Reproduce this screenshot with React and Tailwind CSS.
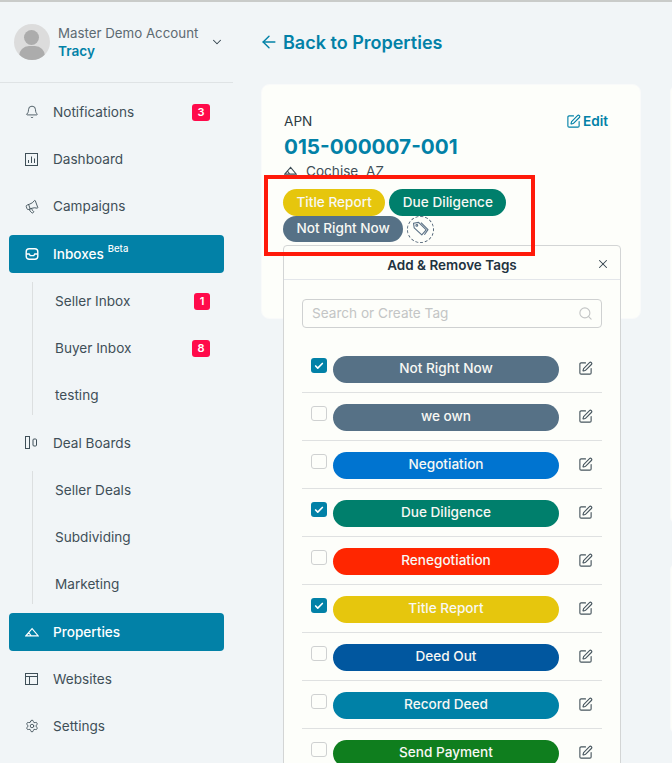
import { ArrowLeft, Bell, Check, ChevronDown, Megaphone, Search, Settings, SquarePen, X } from "lucide-react";

const BoxChart = () => (
  <svg width="13" height="13" viewBox="0 0 13 13" fill="none" stroke="currentColor" strokeWidth="1">
    <rect x="0.5" y="0.5" width="12" height="12" />
    <path d="M3.5 10V7M6.5 10V3.5M9.5 10V5.5" />
  </svg>
);

const InboxIcon = () => (
  <svg width="14" height="14" viewBox="0 0 14 14" fill="none" stroke="currentColor" strokeWidth="1.4">
    <rect x="1.2" y="1.7" width="11.6" height="10.6" rx="3" />
    <path d="M1.2 7h3l1 1.6h3.6l1-1.6h3" />
  </svg>
);

const BoardIcon = () => (
  <svg width="13" height="13" viewBox="0 0 13 13" fill="none" stroke="currentColor" strokeWidth="1">
    <rect x="0.5" y="0.5" width="4" height="12" />
    <rect x="8" y="3" width="3.5" height="7" rx="1" />
  </svg>
);

const Mountain = ({ w = 14, h = 10 }) => (
  <svg width={w} height={h} viewBox="0 0 15 10" fill="none" stroke="currentColor" strokeWidth="1.2">
    <path d="M0.8 9.2L7.6 1.4l6.6 7.8zM0.8 9.2l3.4-3.4 2.4 3.4" />
  </svg>
);

const LayoutIcon = () => (
  <svg width="13" height="12" viewBox="0 0 13 12" fill="none" stroke="currentColor" strokeWidth="1">
    <rect x="0.5" y="0.5" width="12" height="11" />
    <path d="M0.5 3.5h12M4.5 3.5v8" />
  </svg>
);

const TagIcon = () => (
  <svg width="18" height="18" viewBox="0 0 18 18" fill="none" stroke="currentColor" strokeWidth="1.1" strokeLinejoin="round">
    <path d="M1.5 3.2L6.6 2.4l7.6 7.4-4.4 5-7.6-7z" />
    <circle cx="4.8" cy="5.4" r="0.9" />
    <path d="M9 2.6l7 7-3.6 5.2" />
  </svg>
);

const Badge = ({ n, wide }) => (
  <span className={`ml-auto mr-[12px] flex h-[17px] items-center justify-center rounded-[3px] bg-[#ff0a4a] text-[11px] font-semibold text-white ${wide ? "w-[18px]" : "w-[16px]"}`}>
    {n}
  </span>
);

const NavItem = ({ icon, label, badge, active, children }) => (
  <div className={`flex h-[38px] items-center rounded-[4px] pl-[16px] pr-[2px] text-[13.6px] ${active ? "bg-[#0281a7] font-medium text-white" : "text-[#3f4f58]"}`}>
    <span className="flex w-[28px] shrink-0 items-center">{icon}</span>
    <span>{label}</span>
    {children}
    {badge && <Badge n={badge} wide={badge !== "1"} />}
  </div>
);

const SubGroup = ({ items }) => (
  <div className="ml-[23px] flex flex-col gap-[9.25px] border-l border-[#dcdfe0] pl-[22px]">
    {items.map(([label, badge]) => (
      <div key={label} className="flex h-[38px] items-center text-[13.6px] text-[#3f4f58]">
        <span>{label}</span>
        {badge && <span className="ml-auto mr-[2px]"><Badge n={badge} wide={badge !== "1"} /></span>}
      </div>
    ))}
  </div>
);

const Tag = ({ color, children }) => (
  <span className={`flex h-[26.5px] items-center rounded-full px-[13.5px] text-[13.6px] font-medium leading-none text-[#f8f8f4] ${color}`}>
    {children}
  </span>
);

const tags = [
  ["Not Right Now", "bg-[#567186]", true],
  ["we own", "bg-[#567186]", false],
  ["Negotiation", "bg-[#0074d0]", false],
  ["Due Diligence", "bg-[#007f6c]", true],
  ["Renegotiation", "bg-[#ff2600]", false],
  ["Title Report", "bg-[#e6c60d]", true],
  ["Deed Out", "bg-[#01579f]", false],
  ["Record Deed", "bg-[#0081a7]", false],
  ["Send Payment", "bg-[#0f7e1e]", false],
];

function TagPopover() {
  return (
    <div className="absolute left-[21px] top-[160px] w-[338px] rounded-t-[4px] border border-[#d3d5d5] bg-[#fdfefa] pb-[20px]">
      <div className="relative flex h-[34px] items-center justify-center border-b border-[#e3e6ea] pt-[5px] text-[13.5px] font-semibold text-[#1f333f]">
        Add & Remove Tags
        <X size={14} strokeWidth={1.8} className="absolute right-[10px] top-[11px] text-[#33434d]" />
      </div>
      <div className="px-[18px] pt-[19px]">
        <div className="flex h-[29px] items-center justify-between rounded-[4px] border border-[#cfd1d1] pl-[9px] pr-[8px] text-[13.6px] text-[#c3c5c5]">
          <span>Search or Create Tag</span>
          <Search size={15} strokeWidth={1.8} />
        </div>
        <div className="mt-[17px]">
          {tags.map(([label, color, checked]) => (
            <div key={label} className="flex h-[48px] items-start border-b border-[#dfe1e1] pt-[11px] pl-[9px]">
              {checked ? (
                <span className="mt-[2px] flex h-[15px] w-[16px] items-center justify-center rounded-[3px] bg-[#0281a7]">
                  <Check size={10} strokeWidth={4} className="text-white" />
                </span>
              ) : (
                <span className="mt-[2px] h-[15px] w-[16px] rounded-[3px] border border-[#cfd1d1]" />
              )}
              <span className={`ml-[6px] flex h-[27px] w-[226px] items-center justify-center rounded-full pb-[3px] text-[13.6px] font-medium text-[#f8f8f4] ${color}`}>
                {label}
              </span>
              <SquarePen size={15} strokeWidth={1.8} className="ml-[19px] mt-[5px] text-[#47565e]" />
            </div>
          ))}
        </div>
      </div>
    </div>
  );
}

export default function App() {
  return (
    <div className="h-[763px] w-[672px] overflow-hidden border-t-2 border-[#c9cbc9] bg-[#f1f5f7] font-['Inter',sans-serif]">
      <div className="flex">
        <aside className="w-[233px] shrink-0">
          <div className="flex h-[81px] items-center border-b border-[#dfe3e5] pl-[14px]">
            <div className="relative h-[36px] w-[36px] overflow-hidden rounded-full bg-[#dcdcdc]">
              <div className="absolute left-[10px] top-[6px] h-[15px] w-[15px] rounded-full bg-[#acacac]" />
              <div className="absolute left-[5px] top-[22px] h-[20px] w-[26px] rounded-full bg-[#acacac]" />
            </div>
            <div className="ml-[8px] text-[13.3px] leading-[18px]">
              <div className="text-[#5d6a72]">Master Demo Account</div>
              <div className="text-[13.6px] font-semibold text-[#0281a7]">Tracy</div>
            </div>
            <ChevronDown size={14} strokeWidth={1.8} className="ml-auto mr-[9px] text-[#33434d]" />
          </div>
          <nav className="ml-[9px] mr-[9px] mt-[10px] flex flex-col gap-[9.25px]">
            <NavItem icon={<Bell size={14} strokeWidth={1.5} />} label="Notifications" badge="3" />
            <NavItem icon={<BoxChart />} label="Dashboard" />
            <NavItem icon={<Megaphone size={14} strokeWidth={1.4} className="-rotate-[20deg]" />} label="Campaigns" />
            <NavItem icon={<InboxIcon />} label="Inboxes" active>
              <sup className="ml-[4px] text-[9.5px]">Beta</sup>
            </NavItem>
            <SubGroup items={[["Seller Inbox", "1"], ["Buyer Inbox", "8"], ["testing"]]} />
            <NavItem icon={<BoardIcon />} label="Deal Boards" />
            <SubGroup items={[["Seller Deals"], ["Subdividing"], ["Marketing"]]} />
            <NavItem icon={<Mountain />} label="Properties" active />
            <NavItem icon={<LayoutIcon />} label="Websites" />
            <NavItem icon={<Settings size={14} strokeWidth={1.5} />} label="Settings" />
          </nav>
        </aside>

        <main className="min-w-0 flex-1 pl-[28px]">
          <div className="flex h-[82px] items-start pt-[30px] text-[18px] font-semibold leading-[22px] text-[#0281a7]">
            <ArrowLeft size={20} strokeWidth={1.7} className="-ml-[2px]" />
            <span className="ml-[4px]">Back to Properties</span>
          </div>
          <div className="flex gap-[29px]">
            <section className="relative h-[235px] w-[380px] shrink-0 rounded-[8px] border border-[#f9fafa] bg-[#fdfefa] px-[22px] pt-[26px]">
              <div className="flex items-center justify-between pr-[10px] text-[13.6px] text-[#2c3a42]">
                <span>APN</span>
                <span className="flex items-center gap-[2px] font-semibold text-[#0281a7]">
                  <SquarePen size={15} strokeWidth={1.8} />
                  Edit
                </span>
              </div>
              <div className="mt-[2px] text-[20.7px] font-bold leading-[27px] text-[#0281a7]">015-000007-001</div>
              <div className="mt-[2px] flex h-[17px] items-center gap-[9px] text-[13.6px] text-[#3f4f58]">
                <Mountain w={13} h={9} />
                <span>Cochise, AZ</span>
              </div>
              <div className="-ml-[1px] mt-[10px] flex flex-wrap gap-x-[4px] gap-y-0">
                <Tag color="bg-[#e6c60d]">Title Report</Tag>
                <Tag color="bg-[#007f6c]">Due Diligence</Tag>
                <Tag color="bg-[#567186]">Not Right Now</Tag>
                <span className="flex h-[27px] w-[27px] items-center justify-center rounded-full border border-dashed border-[#55687a] text-[#5a7186]">
                  <TagIcon />
                </span>
              </div>
              <TagPopover />
              <div className="absolute left-[2px] top-[90px] h-[81px] w-[271px] border-[4px] border-[#ff1a0a]" />
            </section>
            <div className="flex flex-col gap-[37px]">
              <div className="h-[441px] w-[100px] rounded-[8px] border border-[#f9fafa] bg-[#fdfefa]" />
              <div className="h-[173px] w-[100px] rounded-[8px] border border-[#f9fafa] bg-[#fdfefa]" />
            </div>
          </div>
        </main>
      </div>
    </div>
  );
}
